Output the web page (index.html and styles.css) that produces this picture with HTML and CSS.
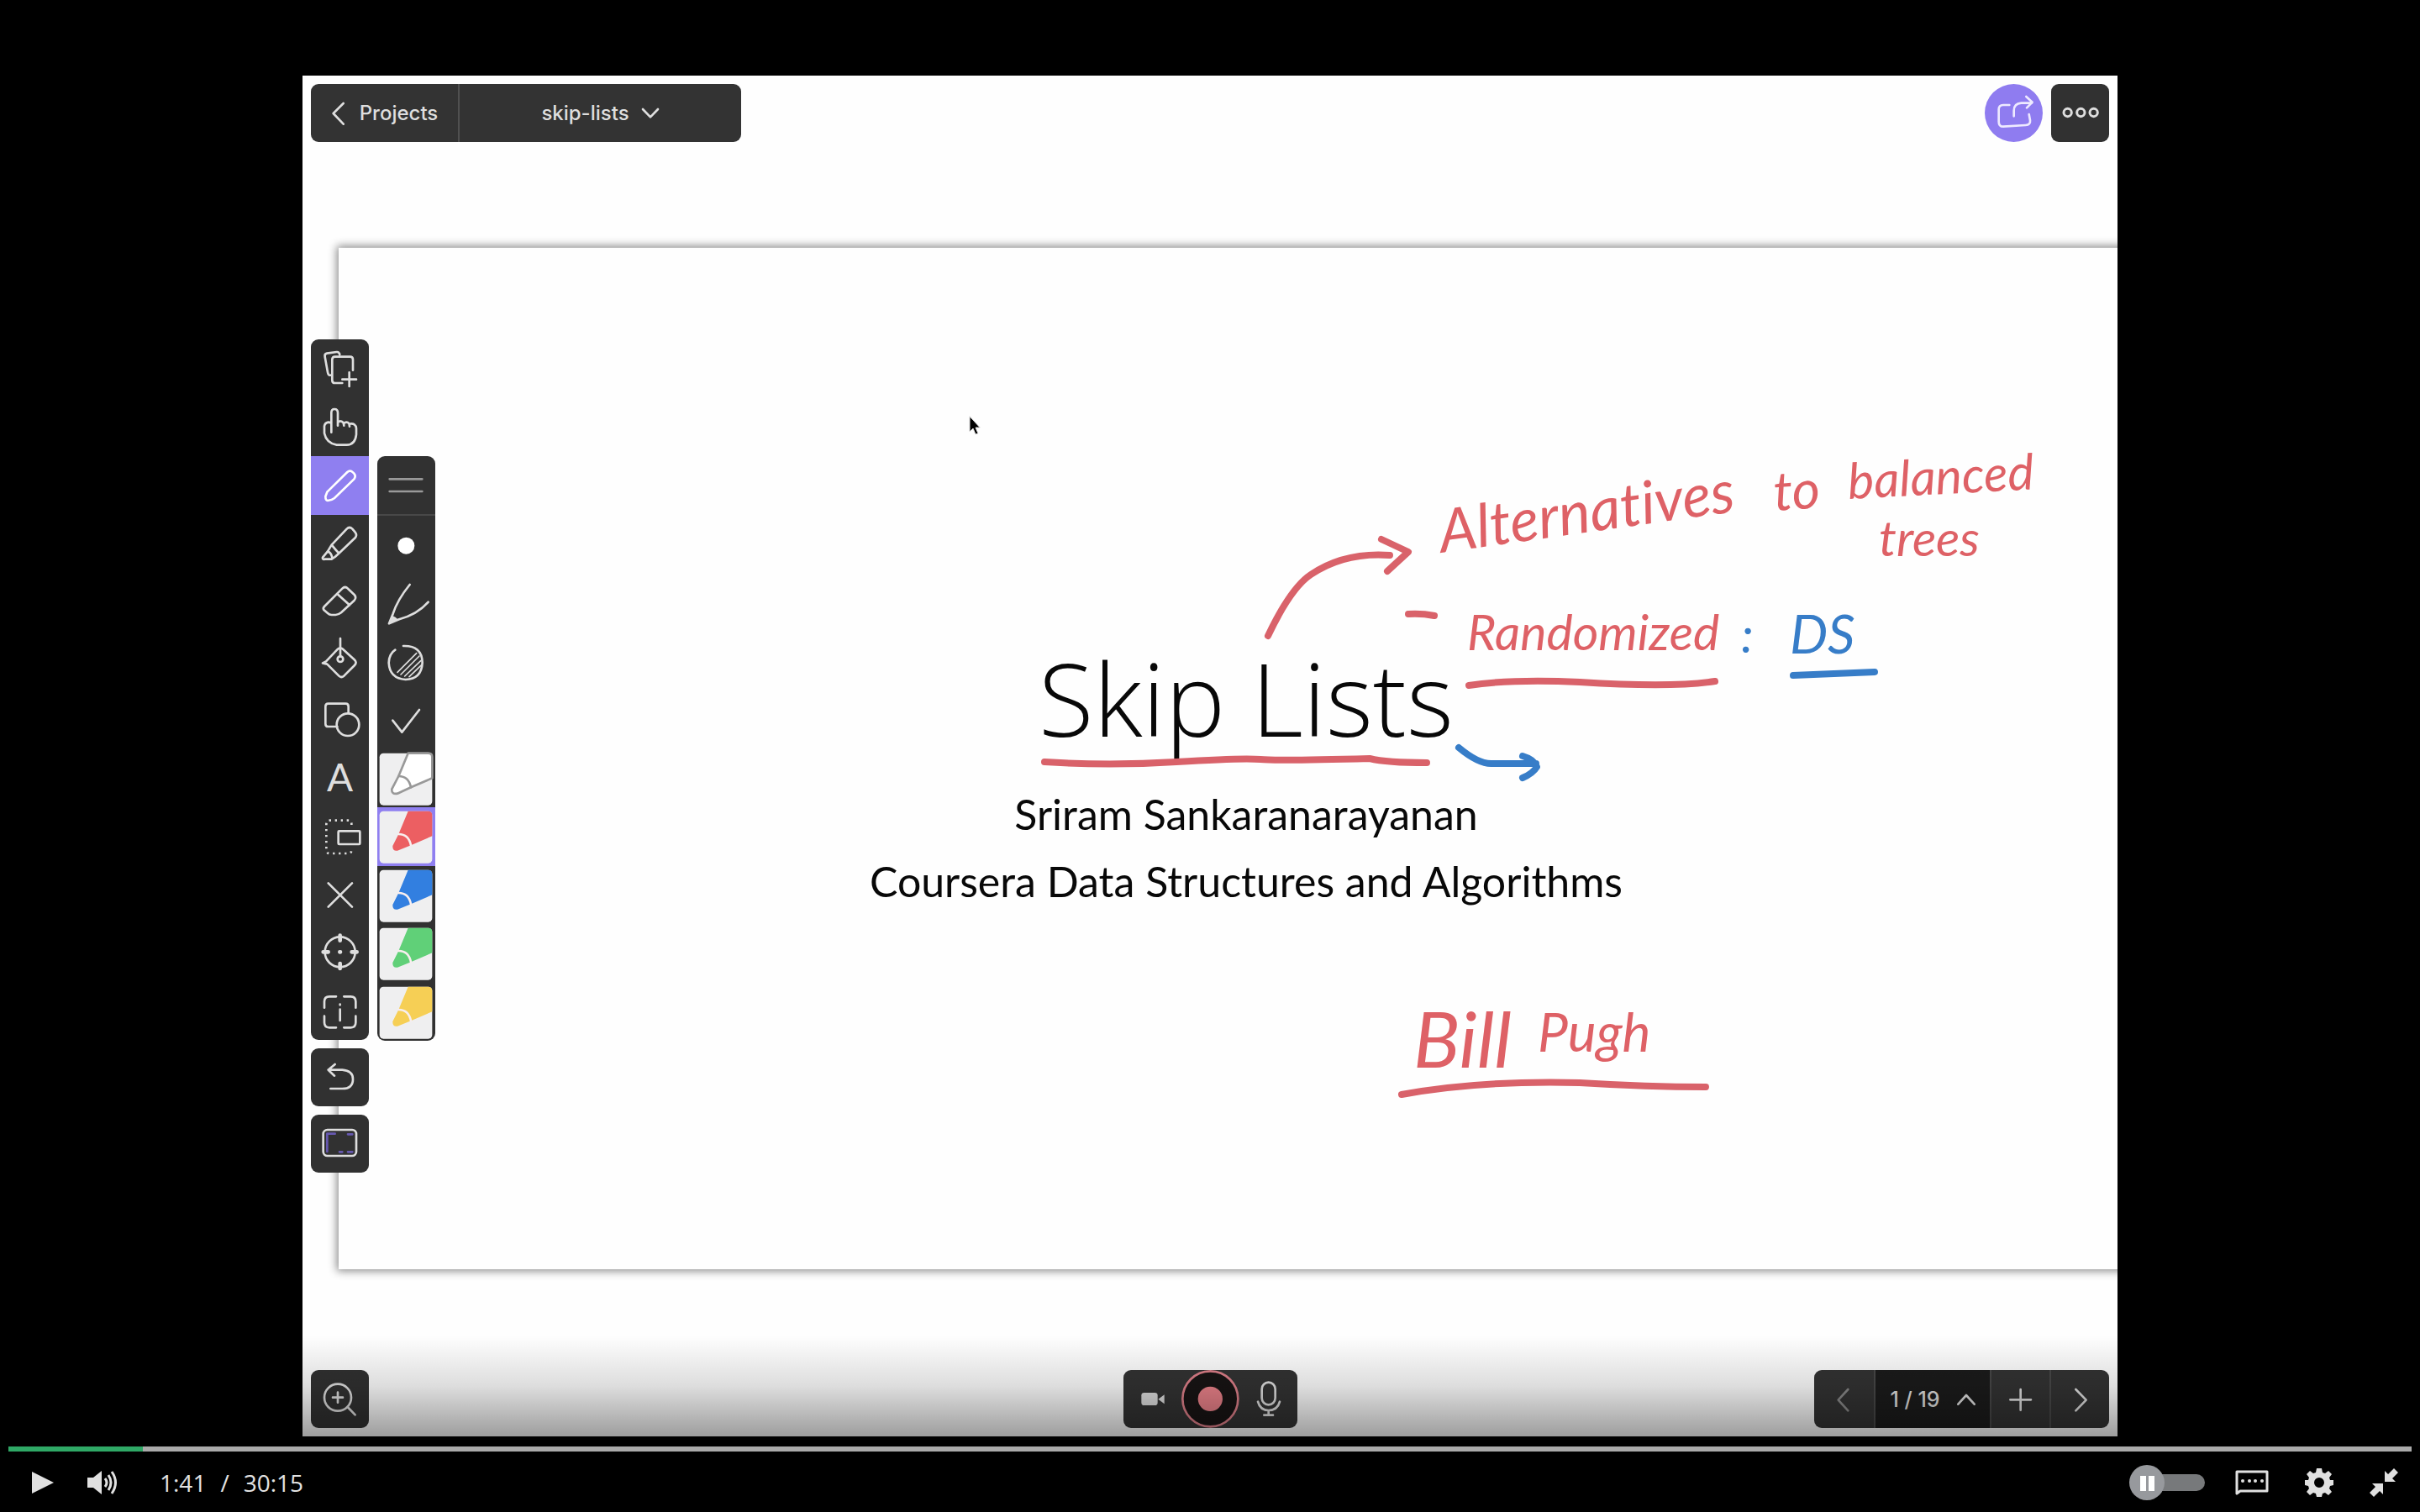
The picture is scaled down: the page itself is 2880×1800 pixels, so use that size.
FILE: index.html
```html
<!DOCTYPE html>
<html lang="en">
<head>
<meta charset="utf-8">
<title>Skip Lists</title>
<link rel="stylesheet" href="styles.css">
</head>
<body>
<main class="stage">
  <div class="frame">
    <section class="slide">
      <h1>Skip Lists</h1>
      <p>Sriram Sankaranarayanan</p>
      <p>Coursera Data Structures and Algorithms</p>
    </section>

    <svg class="ink" viewBox="360 90 2160 1620">
      <g class="red">
        <path d="M1509 757Q1536 700 1560 684Q1600 657 1654 661M1644 642L1676 657L1651 680"/>
        <path d="M1676 731Q1692 730 1707 733"/>
        <path d="M1748 816Q1800 808 1880 812Q1990 819 2041 811"/>
        <path d="M1243 907Q1320 912 1400 907T1500 904T1630 903Q1650 908 1698 908"/>
        <path d="M1668 1303Q1760 1286 1880 1289Q1960 1294 2030 1294"/>
      </g>
      <g class="blue">
        <path d="M1736 890Q1760 910 1776 909H1828M1812 900Q1826 904 1829 913Q1824 921 1812 926"/>
        <path d="M2134 804L2231 800"/>
      </g>
      <g class="words">
        <text x="1716" y="658" font-size="71" transform="rotate(-8 1716 658)">Alternatives</text>
        <text x="2112" y="608" font-size="64" transform="rotate(-4 2112 608)">to</text>
        <text x="2200" y="594" font-size="59" transform="rotate(-3 2200 594)">balanced</text>
        <text x="2236" y="662" font-size="59">trees</text>
        <text x="1746" y="774" font-size="59">Randomized</text>
        <text x="1682" y="1271" font-size="92">Bill</text>
        <text x="1830" y="1252" font-size="64">Pugh</text>
      </g>
      <g class="words blue-words">
        <text x="2072" y="777" font-size="59">:</text>
        <text x="2130" y="778" font-size="64">DS</text>
      </g>
      <path class="cursor" d="M1154 496V514L1158 510L1161 517L1164 516L1161 509H1166Z"/>
    </svg>

    <div class="chrome">
      <header class="row">
        <nav class="bar">
          <button class="projects"><svg class="chev" viewBox="0 0 48 84"><path d="M44 6L8 42L44 80"/></svg>Projects</button>
          <button class="doc">skip-lists<svg class="down" viewBox="0 0 66 42"><path d="M6 6L33 34L60 6"/></svg></button>
        </nav>
        <div class="row actions">
          <button class="tool share" aria-label="Share"><svg viewBox="0 0 207 207"><path d="M88 75H66Q50 76 50 90V134Q50 152 66 152L146 147Q164 146 162 130L158 108M104 115V95Q104 70 130 68H168M148 45L170 65L150 85"/></svg></button>
          <button class="tool single" aria-label="More"><svg viewBox="0 0 207 207" class="heavy"><circle cx="59" cy="102" r="14"/><circle cx="106" cy="102" r="14"/><circle cx="152" cy="102" r="14"/></svg></button>
        </div>
      </header>

      <div class="tools">
        <div class="column">
          <div class="palette main-tools">
            <button class="tool" aria-label="Add page"><svg viewBox="0 0 207 207"><path d="M72 128Q62 130 60 118L50 62Q48 52 57 50L92 45Q100 44 103 54M150 110V72Q150 62 140 62H86Q76 62 76 72V146Q76 156 86 156H112M137 118V168M112 143H162"/></svg></button>
            <button class="tool" aria-label="Pan"><svg viewBox="0 0 207 207"><path d="M73 122V52Q73 39 84 39Q96 39 96 52V98M96 88Q100 80 110 83Q118 86 118 98M118 90Q124 84 132 87Q138 91 138 101M138 92Q160 88 162 108V130Q158 166 128 167H92Q55 160 48 125V100Q50 88 62 86Q72 86 73 92"/></svg></button>
            <button class="tool active" aria-label="Pen"><svg viewBox="0 0 207 207"><path d="M52 144L58 128L130 57Q140 48 150 58L154 62Q162 72 154 82L84 150Q76 157 60 159Q52 158 52 144Z"/></svg></button>
            <button class="tool" aria-label="Highlighter"><svg viewBox="0 0 207 207"><path d="M74 107L128 50Q138 40 148 50L158 62Q166 72 158 82L100 137Q88 125 74 107ZM74 107L60 130L42 152Q40 160 50 158H74L86 150L100 137M60 130Q72 135 76 152"/></svg></button>
            <button class="tool" aria-label="Eraser"><svg viewBox="0 0 207 207"><path d="M48 120L112 56Q122 46 132 56L155 78Q164 88 155 98L108 142Q98 150 88 150H74Q66 150 60 144L46 132Q42 126 48 120ZM94 75L138 115"/></svg></button>
            <button class="tool" aria-label="Fill"><svg viewBox="0 0 207 207"><path d="M42 112L54 106L96 62Q105 54 114 62L155 100Q166 110 156 120L118 158Q108 166 100 158L58 116ZM105 24V88"/><circle cx="105" cy="98" r="10"/></svg></button>
            <button class="tool" aria-label="Shapes"><svg viewBox="0 0 207 207"><path d="M94 132H62Q52 132 52 122V60Q52 50 62 50H124Q134 50 134 60V84"/><circle cx="132" cy="125" r="40"/></svg></button>
            <button class="tool letter" aria-label="Text">A</button>
            <button class="tool" aria-label="Select"><svg viewBox="0 0 207 207"><path class="dots" d="M145 66V62Q145 50 133 50H68Q55 50 55 64V154Q55 168 68 168H133Q145 168 145 156V150"/><rect x="98" y="88" width="77" height="47" rx="3"/></svg></button>
            <button class="tool" aria-label="Delete"><svg viewBox="0 0 207 207"><path d="M62 64L147 149M147 64L62 149"/></svg></button>
            <button class="tool" aria-label="Laser"><svg viewBox="0 0 207 207"><circle cx="104" cy="103" r="54"/><path class="thick" d="M104 44V62M104 144V162M44 103H62M146 103H164M103 103H105"/></svg></button>
            <button class="tool" aria-label="Inspect"><svg viewBox="0 0 207 207"><path d="M48 92V70Q48 52 66 52H90M118 52H142Q160 52 160 70V92M160 122V145Q160 163 142 163H118M90 163H66Q48 163 48 145V122M104 98V138M104 80V82"/></svg></button>
          </div>
          <button class="tool single" aria-label="Undo"><svg viewBox="0 0 207 207"><path d="M62 77H112Q150 80 150 110Q150 144 112 144H70M86 57L62 77L84 98"/></svg></button>
          <button class="tool single" aria-label="Screen"><svg viewBox="0 0 207 207"><rect x="44" y="54" width="118" height="93" rx="15"/><path class="corner" d="M58 132V68H86M132 70H148M102 133H112M132 133H148"/></svg></button>
        </div>

        <div class="palette pen-tools">
          <button class="tool grip" aria-label="Move palette"><svg viewBox="0 0 207 207"><path d="M44 82H160M44 126H160"/></svg></button>
          <button class="tool" aria-label="Stroke width"><svg viewBox="0 0 207 207"><circle class="solid nib" cx="103" cy="107" r="30"/></svg></button>
          <button class="tool" aria-label="Stroke style"><svg viewBox="0 0 207 207"><path d="M116 36Q72 90 56 140L42 175L78 160Q144 142 182 98"/><path class="solid" d="M52 148L42 175L74 162Q66 150 52 148Z"/></svg></button>
          <button class="tool" aria-label="Opacity"><svg viewBox="0 0 207 207"><path d="M93 48Q160 46 161 108Q158 166 101 168Q44 164 41 108Q42 76 64 62"/><path class="thin" d="M72 142L140 74M84 150L150 84M98 156L156 100M114 158L158 116"/></svg></button>
          <button class="tool" aria-label="Confirm"><svg viewBox="0 0 207 207"><path d="M55 104L88 146L150 66"/></svg></button>
          <button class="tool swatch white" aria-label="White pen"><svg viewBox="0 0 207 207"><rect class="tile" x="8" y="14" width="188" height="186" rx="14"/><path class="marker" d="M110 14L76 96L52 142Q50 162 72 158L120 136L196 103V28Q196 14 182 14Z"/><path class="band" d="M76 96Q112 96 120 136"/></svg></button>
          <button class="tool swatch redpen active" aria-label="Red pen"><svg viewBox="0 0 207 207"><rect class="tile" x="8" y="14" width="188" height="186" rx="14"/><path class="marker" d="M110 14L76 96L55 138Q54 158 72 155L120 136L196 103V28Q196 14 182 14Z"/><path class="band" d="M76 96Q112 96 120 136"/></svg></button>
          <button class="tool swatch bluepen" aria-label="Blue pen"><svg viewBox="0 0 207 207"><rect class="tile" x="8" y="14" width="188" height="186" rx="14"/><path class="marker" d="M110 14L76 96L55 138Q54 158 72 155L120 136L196 103V28Q196 14 182 14Z"/><path class="band" d="M76 96Q112 96 120 136"/></svg></button>
          <button class="tool swatch greenpen" aria-label="Green pen"><svg viewBox="0 0 207 207"><rect class="tile" x="8" y="14" width="188" height="186" rx="14"/><path class="marker" d="M110 14L76 96L55 138Q54 158 72 155L120 136L196 103V28Q196 14 182 14Z"/><path class="band" d="M76 96Q112 96 120 136"/></svg></button>
          <button class="tool swatch yellowpen" aria-label="Yellow pen"><svg viewBox="0 0 207 207"><rect class="tile" x="8" y="14" width="188" height="186" rx="14"/><path class="marker" d="M110 14L76 96L55 138Q54 158 72 155L120 136L196 103V28Q196 14 182 14Z"/><path class="band" d="M76 96Q112 96 120 136"/></svg></button>
        </div>
      </div>

      <footer class="bottom">
        <button class="tool single" aria-label="Zoom in"><svg viewBox="0 0 207 207"><circle cx="96" cy="98" r="48"/><path d="M131 132L158 160M78 98H114M96 80V116"/></svg></button>
        <div class="bar recorder">
          <button class="tool" aria-label="Camera"><svg viewBox="0 0 207 207"><rect class="solid" x="64" y="81" width="58" height="45" rx="10"/><path class="solid" d="M124 104L146 88V121Z"/></svg></button>
          <button class="tool" aria-label="Record"><svg viewBox="0 0 207 207"><circle class="ring" cx="103" cy="103" r="99"/><circle class="dot" cx="103" cy="103" r="44"/></svg></button>
          <button class="tool" aria-label="Microphone"><svg viewBox="0 0 207 207"><rect x="80" y="44" width="48" height="80" rx="24"/><path d="M66 113Q74 144 104 144Q136 144 144 113M104 144V160M88 161H120"/></svg></button>
        </div>
        <div class="bar pager">
          <button class="tool muted" aria-label="Previous page"><svg viewBox="0 0 207 207"><path d="M118 69L83 107L118 145"/></svg></button>
          <button class="page">1 / 19<svg class="up" viewBox="0 0 66 42"><path d="M4 38L33 6L62 38"/></svg></button>
          <button class="tool" aria-label="Add page"><svg viewBox="0 0 207 207"><path d="M67 106H141M104 69V143"/></svg></button>
          <button class="tool" aria-label="Next page"><svg viewBox="0 0 207 207"><path d="M88 69L125 107L88 145"/></svg></button>
        </div>
      </footer>
    </div>
    <div class="shade"></div>
  </div>
</main>

<div class="player">
  <div class="progress"><div class="played" style="width:5.6%"></div></div>
  <div class="controls">
    <div class="left">
      <button class="ctl" aria-label="Play"><svg width="40" height="40" viewBox="0 0 40 40"><path d="M8 7L34 20L8 33Z"/></svg></button>
      <button class="ctl volume" aria-label="Volume"><svg width="40" height="40" viewBox="0 0 40 40"><path d="M2 14H9L19 6V34L9 26H2Z"/><path class="wave" d="M23 15Q27 20 23 25M27 11Q33 20 27 29M31 7Q40 20 31 33"/></svg></button>
      <span class="time">1:41</span><span class="time sep">/</span><span class="time">30:15</span>
    </div>
    <div class="right">
      <label class="autoplay"><input type="checkbox" aria-label="Autoplay"><span class="knob"></span></label>
      <button class="ctl" aria-label="Captions"><svg width="40" height="40" viewBox="0 0 40 40"><path class="line" d="M2 33V7H38V30H6Z"/><circle cx="9" cy="18" r="2"/><circle cx="17" cy="18" r="2"/><circle cx="24" cy="18" r="2"/><circle cx="32" cy="18" r="2"/></svg></button>
      <button class="ctl" aria-label="Settings"><svg width="40" height="40" viewBox="0 0 40 40"><path fill-rule="evenodd" d="M17 3H23L24 8L27 9L31 6L35 10L32 14L33 17L37 17V23L33 24L32 27L35 31L31 35L27 32L24 33L23 37H17L16 33L13 32L9 35L5 31L8 27L7 24L3 23V17L7 17L8 14L5 10L9 6L13 9L16 8ZM20 14A6 6 0 1 0 20 26A6 6 0 1 0 20 14Z"/></svg></button>
      <button class="ctl" aria-label="Exit full screen"><svg width="40" height="40" viewBox="0 0 40 40"><path d="M21 19V6L25 10L32 3L37 8L30 15L34 19ZM19 21V34L15 30L8 37L3 32L10 25L6 21Z"/></svg></button>
    </div>
  </div>
</div>
</body>
</html>
```
FILE: styles.css
```css
* { box-sizing: border-box; }

body {
  margin: 0;
  min-height: 100vh;
  display: flex;
  flex-direction: column;
  background: #000;
  font-family: Inter, sans-serif;
}

button {
  display: flex;
  align-items: center;
  justify-content: center;
  margin: 0;
  padding: 0;
  border: 0;
  background: none;
  color: #dedede;
  font: inherit;
}

svg { display: block; fill: none; }

.stage {
  flex: 1;
  display: flex;
  justify-content: center;
  padding-top: 90px;
}

.frame {
  position: relative;
  width: 75%;
  overflow: hidden;
  background: #fefefe;
}

/* Slide */
.slide {
  width: 100%;
  height: 1216px;
  margin: 205px 0 0 43px;
  padding-top: 466px;
  background: #fefefe;
  box-shadow: 0 0 10px 2px #888;
  color: #080808;
  font-family: Lato, "Open Sans", sans-serif;
  text-align: center;
}

.slide h1 {
  margin: 0 0 28px;
  font-family: "Open Sans", sans-serif;
  font-size: 120px;
  line-height: 140px;
  font-weight: 300;
}

.slide p {
  margin: 0;
  font-size: 50px;
  line-height: 80px;
}

.ink {
  position: absolute;
  inset: 0;
  width: 100%;
  height: 100%;
  stroke-width: 8;
  stroke-linecap: round;
  stroke-linejoin: round;
}

.red { stroke: #d9626a; }
.blue { stroke: #377dc8; }
.words {
  fill: #de6166;
  font-family: Lato, sans-serif;
  font-style: italic;
  font-variant-ligatures: none;
}
.blue-words { fill: #377dc8; }
.cursor { fill: #000; stroke: #ddd; stroke-width: 1; }

/* Whiteboard controls */
.chrome {
  position: absolute;
  inset: 0;
  display: flex;
  flex-direction: column;
  justify-content: space-between;
  padding: 10px;
  font-size: 24px;
  font-weight: 500;
}

.row { display: flex; justify-content: space-between; }
.actions { gap: 10px; }

.bar {
  display: flex;
  border-radius: 9px;
  background: #333;
  overflow: hidden;
}

.projects {
  width: 177px;
  height: 69px;
  gap: 18px;
  border-right: 2px solid #505050;
}

.doc { width: 335px; gap: 14px; }

.bar svg, .tool svg {
  stroke: currentColor;
  stroke-width: 8;
  stroke-linecap: round;
  stroke-linejoin: round;
}

.chev { width: 16px; height: 28px; }
.down, .up { width: 22px; height: 14px; }

.tool { width: 69px; height: 69px; }
.tool svg { width: 69px; height: 69px; }
.tool .heavy { stroke-width: 9; }

.single { border-radius: 9px; background: #313131; }
.share { border-radius: 50%; background: #8f7cf0; color: #eeeaff; }
.letter { font-family: Lato, sans-serif; font-size: 46px; line-height: 60px; font-weight: 400; }

.tools { display: flex; gap: 10px; }
.column { display: flex; flex-direction: column; gap: 10px; }

.palette {
  display: grid;
  grid-auto-rows: 1fr;
  width: 69px;
  border-radius: 9px;
  background: #313131;
  overflow: hidden;
}

.main-tools { height: 834px; }
.pen-tools { height: 696px; margin-top: 139px; }
.palette .tool { height: auto; }
.palette .active { background: #8f7ff0; color: #fff; }

.dots { stroke-dasharray: 7 14; stroke-linecap: butt; }
.thick { stroke-width: 14; }
.thin { stroke-width: 5; }
.solid { fill: currentColor; stroke: none; }
.nib { fill: #fff; }
.corner { stroke: #6658b0; }

.grip { color: #999; border-bottom: 2px solid #484848; }

.tile { fill: #efeff0; stroke: none; }
.marker { fill: var(--pen); stroke: none; }
.band { stroke: #f8eeee; }
.white .marker { fill: #fff; stroke: #999; }
.white .band { stroke: #999; }
.redpen { --pen: #ec5f62; }
.bluepen { --pen: #327fe0; }
.greenpen { --pen: #60d078; }
.yellowpen { --pen: #f6cf55; }

.bottom {
  display: grid;
  grid-template-columns: 1fr auto 1fr;
}

.pager { justify-self: end; }
.pager > * + * { border-left: 2px solid #484848; }
.pager > .tool { width: 71px; }
.muted { color: #888; }
.page { width: 138px; gap: 20px; background: #1b1b1b; font-size: 25px; }

.ring { fill: #181414; stroke: #df808a; }
.dot { fill: #ea8189; stroke: none; }

.shade {
  position: absolute;
  inset: auto 0 0;
  height: 120px;
  background: linear-gradient(transparent, rgba(0, 0, 0, .13) 50%, rgba(0, 0, 0, .38));
  pointer-events: none;
}

/* Video player */
.player {
  height: 90px;
  padding: 12px 10px 0;
  color: #e2e2e2;
}

.progress { height: 6px; background: #aaa; }
.played { height: 6px; background: #2fa866; }

.controls {
  display: flex;
  justify-content: space-between;
  padding: 17px 13px 0 20px;
}

.left, .right { display: flex; align-items: center; height: 40px; }
.right { gap: 40px; }
.right .ctl:last-child { margin-left: -3px; }
.ctl svg { fill: #e0e0e0; }
.volume { margin: 0 48px 0 32px; }
.wave, .line { fill: none; stroke: #e0e0e0; stroke-width: 3; stroke-linejoin: round; }

.time { font-family: "Open Sans", sans-serif; font-size: 28px; line-height: 40px; }
.sep { margin: 0 17px; }

.autoplay {
  display: flex;
  align-items: center;
  position: relative;
  width: 90px;
  height: 42px;
  margin-right: -4px;
}

.autoplay input {
  appearance: none;
  width: 70px;
  height: 20px;
  margin: 0 0 0 20px;
  border-radius: 10px;
  background: #77797b;
}

.knob {
  position: absolute;
  left: 0;
  width: 42px;
  height: 42px;
  border-radius: 50%;
  background: #97999d;
}

.knob::before {
  content: "";
  position: absolute;
  inset: 13px 12px 11px 13px;
  border: solid #fff;
  border-width: 0 7px;
}
```
